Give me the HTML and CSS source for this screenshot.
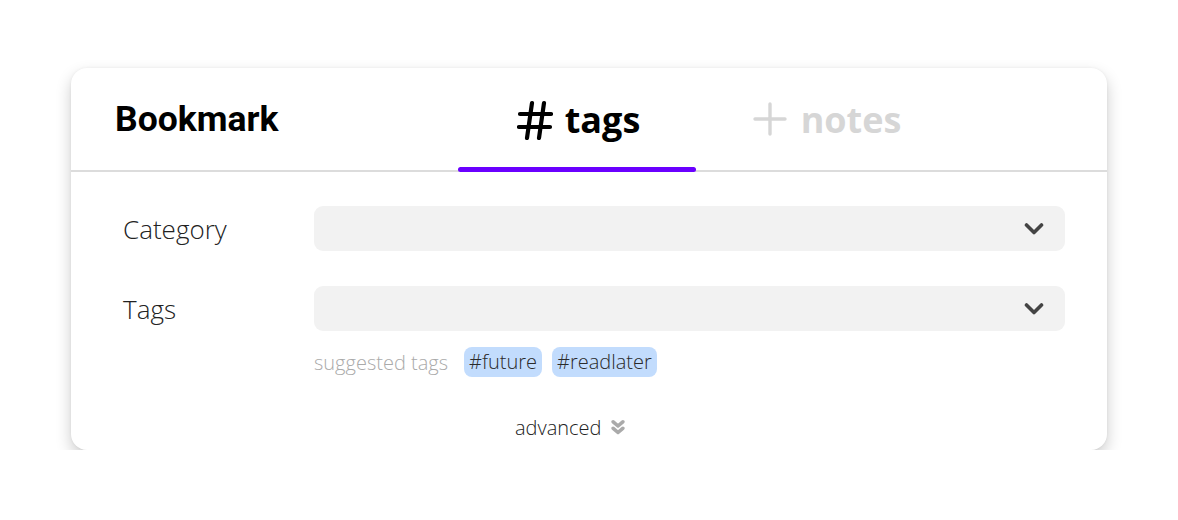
FILE: index.html
```html
<!DOCTYPE html>
<html>
<head>
<meta charset="utf-8">
<link rel="stylesheet" href="styles.css">
</head>
<body>
<div class="card">
  <div class="header">
    <div class="title">Bookmark</div>
    <div class="tab active"><svg class="hash" width="36" height="40" viewBox="0 0 36 40"><path d="M3 14H34M2 27H33M15 3L10 38M27 3L22 38" fill="none" stroke="#000" stroke-width="4.2" stroke-linecap="round"/></svg>tags</div>
    <div class="tab inactive"><svg class="plus" width="34" height="34" viewBox="0 0 34 34"><path d="M17 2V32M2 17H32" stroke="#d6d6d6" stroke-width="3.4" stroke-linecap="round"/></svg>notes</div>
  </div>
  <div class="form">
    <div class="row">
      <div class="label">Category</div>
      <div class="select"><svg class="chev" width="20" height="14" viewBox="0 0 20 14"><path d="M2.5 3L10 10.5L17.5 3" fill="none" stroke="#444" stroke-width="3.6" stroke-linecap="round" stroke-linejoin="round"/></svg></div>
    </div>
    <div class="row">
      <div class="label">Tags</div>
      <div class="select"><svg class="chev" width="20" height="14" viewBox="0 0 20 14"><path d="M2.5 3L10 10.5L17.5 3" fill="none" stroke="#444" stroke-width="3.6" stroke-linecap="round" stroke-linejoin="round"/></svg></div>
    </div>
    <div class="suggest">
      <span class="suggest-label">suggested tags</span>
      <span class="chip">#future</span>
      <span class="chip">#readlater</span>
    </div>
    <div class="advanced">
      <span>advanced</span>
      <svg width="14" height="18" viewBox="0 0 14 18"><path d="M2.2 2.8L7 7L11.8 2.8M2.2 9.3L7 13.5L11.8 9.3" fill="none" stroke="#aaa" stroke-width="3.6" stroke-linecap="round" stroke-linejoin="round"/></svg>
    </div>
  </div>
</div>
</body>
</html>
```
FILE: styles.css
```css
html, body {
  margin: 0;
  padding: 0;
  background: #fff;
}
body {
  padding: 68px 0 0 71px;
}
.card {
  width: 1036px;
  height: 382px;
  box-sizing: border-box;
  background: #fff;
  border-radius: 16px;
  box-shadow: 0 7px 16px rgba(0,0,0,0.2), 0 0 3px rgba(0,0,0,0.06);
}
.header {
  height: 104px;
  box-sizing: border-box;
  border-bottom: 2px solid #dcdcdc;
  display: flex;
  align-items: stretch;
  padding-left: 44px;
}
.title {
  width: 343px;
  font-family: Roboto, "Liberation Sans", sans-serif;
  font-weight: 700;
  font-size: 35.5px;
  color: #000;
  display: flex;
  align-items: center;
}
.tab {
  width: 238px;
  display: flex;
  align-items: center;
  justify-content: center;
  font-family: "Open Sans", sans-serif;
  font-weight: 700;
  font-size: 36px;
  position: relative;
}
.tab.active {
  color: #000;
  padding-left: 3px;
  box-sizing: border-box;
}
.tab.active::after {
  content: "";
  position: absolute;
  left: 0;
  right: 0;
  bottom: -2px;
  height: 5px;
  border-radius: 3px;
  background: #6a00ff;
}
.hash {
  margin-right: 12px;
  margin-top: 2px;
}
.tab.inactive {
  color: #d6d6d6;
  margin-left: 12px;
}
.plus {
  margin-right: 14px;
}
.form {
  padding: 34px 42px 0 52px;
}
.row {
  display: flex;
  align-items: center;
  margin-bottom: 35px;
}
.row:nth-child(2) {
  margin-bottom: 16px;
}
.label {
  width: 191px;
  font-family: "Open Sans", sans-serif;
  font-weight: 300;
  font-size: 26px;
  color: #222;
}
.select {
  flex: 1;
  height: 45px;
  background: #f2f2f2;
  border-radius: 9px;
  display: flex;
  align-items: center;
  justify-content: flex-end;
  padding-right: 21px;
}
.suggest {
  display: flex;
  align-items: center;
  margin-left: 191px;
  font-family: "Open Sans", sans-serif;
  font-size: 20px;
}
.suggest-label {
  color: #aaa;
  font-weight: 300;
  margin-right: 16px;
}
.chip {
  background: #c2dcfd;
  color: #2a2a2a;
  font-weight: 300;
  border-radius: 8px;
  height: 30px;
  line-height: 30px;
  padding: 0 5px;
  margin-right: 10px;
}
.advanced {
  display: flex;
  align-items: center;
  margin-left: 392px;
  margin-top: 37px;
  font-family: "Open Sans", sans-serif;
  font-weight: 300;
  font-size: 20px;
  color: #222;
}
.advanced svg {
  margin-left: 10px;
}
```
